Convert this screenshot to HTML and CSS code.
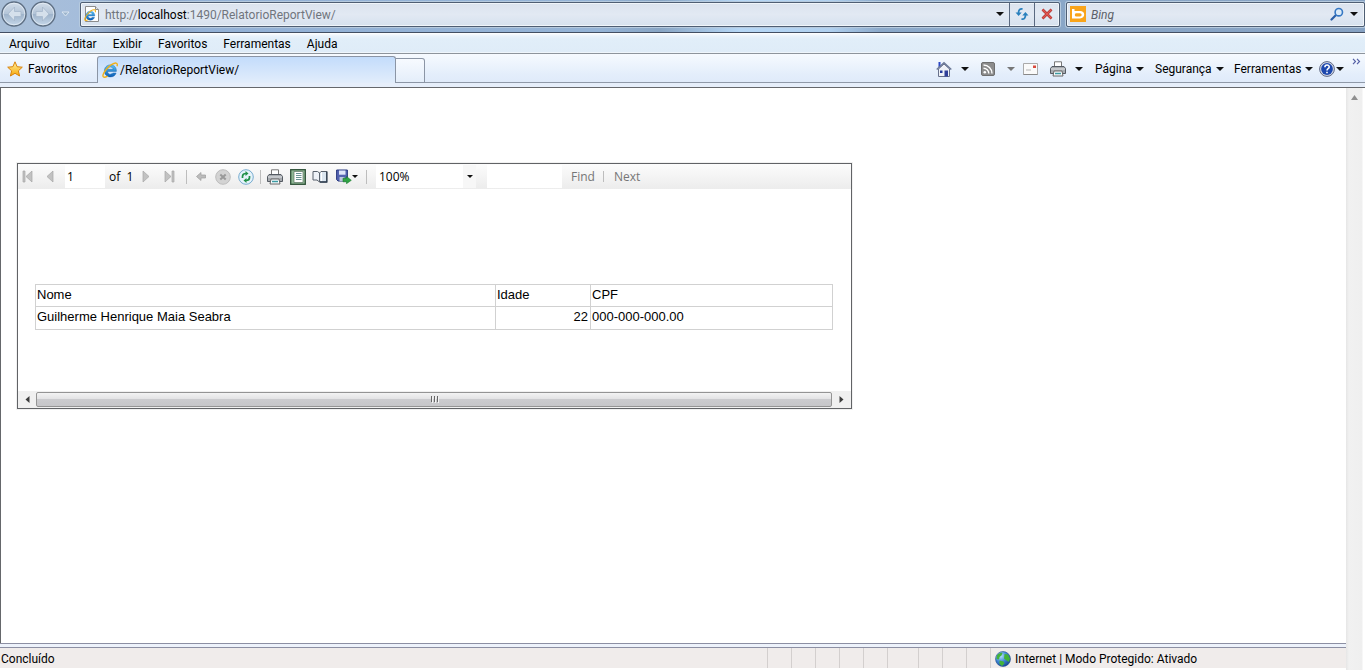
FILE: index.html
```html
<!DOCTYPE html>
<html lang="pt-BR">
<head>
<meta charset="utf-8">
<title>/RelatorioReportView/</title>
<link rel="stylesheet" href="styles.css">
</head>
<body>
<svg class="defs" aria-hidden="true">
  <defs>
    <linearGradient id="ieBlue" x1="0" y1="0" x2="0" y2="1"><stop offset="0" stop-color="#59c4f5"/><stop offset="1" stop-color="#0b5cb5"/></linearGradient>
    <linearGradient id="starGold" x1="0" y1="0" x2="0" y2="1"><stop offset="0" stop-color="#fff3a0"/><stop offset="1" stop-color="#f7a708"/></linearGradient>
    <linearGradient id="navGlass" x1="0" y1="0" x2="0" y2="1"><stop offset="0" stop-color="#d3deea"/><stop offset=".48" stop-color="#b4c5d8"/><stop offset=".52" stop-color="#9fb4cb"/><stop offset="1" stop-color="#c6d8ea"/></linearGradient>
    <radialGradient id="globe" cx=".35" cy=".3" r=".8"><stop offset="0" stop-color="#b7e2fb"/><stop offset=".5" stop-color="#3d86d2"/><stop offset="1" stop-color="#123c8c"/></radialGradient>
  </defs>
  <symbol id="ie" viewBox="0 0 16 16">
    <path d="M14.4 9.4H5.6c.2 1.9 1.3 2.8 2.9 2.8 1.1 0 1.9-.4 2.3-1.2h3.3c-.8 2.5-2.8 3.9-5.6 3.9-3.7 0-6.1-2.4-6.1-6 0-3.5 2.4-6 6-6 4 0 6.2 2.6 6 6.500zM5.600 7.300h5.500c-.2-1.500-1.200-2.300-2.700-2.300-1.500 0-2.500.8-2.800 2.300z" fill="url(#ieBlue)" stroke="#0a58a8" stroke-width=".4"/>
    <path d="M15 4.300c.6-1.800.3-3-.9-3.200C12 .8 7.300 3.500 4 7.700 1.300 11.200.200 14 1.500 15c.8.600 2.300.2 4-.8" fill="none" stroke="#f0b018" stroke-width="1.400"/>
  </symbol>
  <symbol id="printer" viewBox="0 0 16 16">
    <path d="M4.500 6V.8h7V6" fill="#fff" stroke="#777"/>
    <path d="M2 5.500h12l1.500 2v5H.5v-5z" fill="#a7abb0" stroke="#555b63"/>
    <path d="M1 8h14" stroke="#e4e6e9"/>
    <path d="M4 10h8l1 5H3z" fill="#f8fbfd" stroke="#666"/>
    <path d="M5 12.500h6" stroke="#3d9ba3" stroke-width="1.500"/>
  </symbol>
</svg>

<div class="browser">
  <header class="address-row">
    <div class="nav-buttons">
      <button class="icon-btn" aria-label="Voltar"><svg width="26" height="26" viewBox="0 0 26 26"><circle cx="13" cy="13" r="12" fill="url(#navGlass)" stroke="#5e6f83" stroke-width="1.400"/><circle cx="13" cy="13" r="10.800" fill="none" stroke="#e9f1f8" stroke-opacity=".7"/><path d="M13.500 6 7 13l6.500 7v-4.500H20v-5h-6.500z" fill="#d5e0eb" stroke="#a6b8cb" stroke-width=".8"/></svg></button>
      <button class="icon-btn" aria-label="Avançar"><svg width="26" height="26" viewBox="0 0 26 26"><circle cx="13" cy="13" r="12" fill="url(#navGlass)" stroke="#5e6f83" stroke-width="1.400"/><circle cx="13" cy="13" r="10.800" fill="none" stroke="#e9f1f8" stroke-opacity=".7"/><path d="M12.500 6 19 13l-6.500 7v-4.500H6v-5h6.500z" fill="#d5e0eb" stroke="#a6b8cb" stroke-width=".8"/></svg></button>
      <button class="icon-btn history" aria-label="Páginas recentes"><svg width="9" height="6" viewBox="0 0 9 6"><path d="M1 1h7L4.500 5z" fill="#9cb4cc" stroke="#dfe9f3" stroke-width=".9"/></svg></button>
    </div>
    <div class="address">
      <svg width="16" height="16" viewBox="0 0 16 16"><path d="M1.500.5h10l3 3v12h-13z" fill="#fff" stroke="#8c8c8c"/><path d="M11.500.5v3h3" fill="#e4e4e4" stroke="#8c8c8c"/><use href="#ie" x="0" y="3" width="12" height="12"/></svg>
      <div class="url" role="textbox" aria-label="Endereço">http://<b>localhost</b>:1490/RelatorioReportView/</div>
      <button class="icon-btn addr-drop" aria-label="Mostrar endereços"><i class="caret"></i></button>
      <button class="icon-btn addr-action" aria-label="Atualizar"><svg width="14" height="14" viewBox="0 0 14 14"><path d="M7.500 2C5 1.500 3.500 3 3.500 6M6.500 12c2.500.5 4-1 4-4" fill="none" stroke="#2a80bd" stroke-width="1.800"/><path d="M.5 5.500h6.200L3.600 9zM13.500 8.500H7.300L10.400 5z" fill="#2a80bd"/></svg></button>
      <button class="icon-btn addr-action" aria-label="Parar"><svg width="12" height="12" viewBox="0 0 12 12"><path d="m1.500 1.500 9 9m0-9-9 9" stroke="#a9302c" stroke-width="2.600"/><path d="m1.500 1.500 9 9m0-9-9 9" stroke="#e25650" stroke-width="1.400"/></svg></button>
    </div>
    <div class="search">
      <svg width="16" height="16" viewBox="0 0 16 16"><path d="M0 0h16v16H0z" fill="#f9a41a"/><path d="M2 3h2.500v2H10c2.600 0 4.200 1.400 4.200 3.600S12.600 12.500 10 12.500H2zM6 7.200c-1.500 0-1.500 3.200 0 3.200h4c2.200 0 2.200-3.200 0-3.200z" fill="#fff" fill-rule="evenodd"/></svg>
      <input class="search-input" type="text" placeholder="Bing" aria-label="Pesquisar">
      <button class="icon-btn" aria-label="Procurar"><svg width="14" height="14" viewBox="0 0 14 14"><path d="M6.500 7.500 1.500 12.500" stroke="#2a5fa8" stroke-width="2.200" stroke-linecap="round"/><circle cx="8.800" cy="5.200" r="3.700" fill="#dcebf8" stroke="#3678c4" stroke-width="1.600"/></svg></button>
      <button class="icon-btn search-drop" aria-label="Opções de pesquisa"><i class="caret"></i></button>
    </div>
  </header>

  <nav class="menu">
    <button>Arquivo</button><button>Editar</button><button>Exibir</button><button>Favoritos</button><button>Ferramentas</button><button>Ajuda</button>
  </nav>

  <div class="command-row">
    <button class="favorites"><svg width="16" height="16" viewBox="0 0 16 16"><path d="m8 .8 2.100 4.900 5.200.5-3.900 3.600 1.200 5.200L8 12.300 3.400 15l1.200-5.200L.7 6.200l5.200-.5z" fill="url(#starGold)" stroke="#d9820b" stroke-linejoin="round"/></svg>Favoritos</button>
    <button class="tab"><svg width="16" height="16"><use href="#ie"/></svg>/RelatorioReportView/</button>
    <button class="new-tab" aria-label="Nova guia"></button>
    <div class="commands">
      <button class="cmd cmd-home" aria-label="Página inicial"><svg width="16" height="16" viewBox="0 0 16 16"><path d="M2.500 1h2v5h-2z" fill="#2b46c5"/><path d="M2.500 8v7.500h11V8L8 3z" fill="#eef1f7" stroke="#68718c"/><path d="M.7 8.500 8 1.800l7.300 6.700" fill="none" stroke="#6b7896" stroke-width="1.500"/><path d="M8.500 9.500H12v6H8.500z" fill="#2f3f99"/><path d="M4 9.500h2.500V12H4z" fill="#253a9b"/></svg><i class="caret"></i></button>
      <button class="cmd cmd-feed" aria-label="Feeds"><svg width="14" height="14" viewBox="0 0 14 14"><rect x=".5" y=".5" width="13" height="13" rx="1.500" fill="#8c8c8c" stroke="#6f6f6f"/><circle cx="3.800" cy="10.300" r="1.300" fill="#fff"/><path d="M2.500 6.200a5.300 5.300 0 0 1 5.300 5.300M2.500 3a8.500 8.500 0 0 1 8.500 8.500" fill="none" stroke="#fff" stroke-width="1.400"/></svg><i class="caret dim"></i></button>
      <button class="cmd cmd-mail" aria-label="Email"><svg width="15" height="12" viewBox="0 0 15 12"><path d="M.5.5h14v11H.5z" fill="#fafafa" stroke="#aaa"/><path d="M.5 11.500h14" stroke="#888"/><path d="M10 2.500h3v2.500h-3z" fill="#d94a3f"/><path d="M3 7h5" stroke="#b5b5b5"/></svg></button>
      <button class="cmd cmd-print" aria-label="Imprimir"><svg width="16" height="16"><use href="#printer"/></svg><i class="caret"></i></button>
      <button class="cmd cmd-page">Página<i class="caret"></i></button>
      <button class="cmd cmd-safety">Segurança<i class="caret"></i></button>
      <button class="cmd cmd-tools">Ferramentas<i class="caret"></i></button>
      <button class="cmd cmd-help" aria-label="Ajuda"><svg width="16" height="16" viewBox="0 0 16 16"><circle cx="8" cy="8" r="7.400" fill="#d7dce8" stroke="#5d6785"/><circle cx="8" cy="8" r="5.900" fill="#1d48ae"/><path d="M5.900 6.200c0-3 4.400-2.800 4.300-.2C10.200 7.600 8 7.600 8 9.400M8 10.700v1.600" fill="none" stroke="#fff" stroke-width="1.600"/></svg><i class="caret"></i></button>
      <button class="cmd more" aria-label="Mais"><svg width="9" height="7" viewBox="0 0 9 7"><path d="m1 .8 2.500 2.700L1 6.200M5 .8l2.500 2.700L5 6.200" fill="none" stroke="#5661a6" stroke-width="1.200"/></svg></button>
    </div>
  </div>

  <div class="body-row">
    <div class="page-column">
      <main class="page">
        <section class="report">
          <div class="report-bar">
            <button class="icon-btn first" aria-label="Primeira página"><svg width="11" height="13" viewBox="0 0 11 13"><path d="M1 1h2v11H1zM10 1v11L4 6.500z" fill="#c2c2c2" stroke="#a6a6a6" stroke-width=".7"/></svg></button>
            <button class="icon-btn prev" aria-label="Página anterior"><svg width="8" height="13" viewBox="0 0 8 13"><path d="M7 1v11L1 6.500z" fill="#c2c2c2" stroke="#a6a6a6" stroke-width=".7"/></svg></button>
            <input class="page-input" type="text" value="1" aria-label="Página atual">
            <span class="total">of&nbsp; 1</span>
            <button class="icon-btn next" aria-label="Próxima página"><svg width="8" height="13" viewBox="0 0 8 13"><path d="M1 1v11l6-5.500z" fill="#c2c2c2" stroke="#a6a6a6" stroke-width=".7"/></svg></button>
            <button class="icon-btn last" aria-label="Última página"><svg width="11" height="13" viewBox="0 0 11 13"><path d="M8 1h2v11H8zM1 1v11l6-5.500z" fill="#c2c2c2" stroke="#a6a6a6" stroke-width=".7"/></svg></button>
            <i class="divider"></i>
            <button class="icon-btn back" aria-label="Voltar ao relatório pai"><svg width="10" height="9" viewBox="0 0 10 9"><path d="M5 .5.500 4.500l4.500 4V6h4.500V3H5z" fill="#bcbcbc" stroke="#9d9d9d" stroke-width=".7"/></svg></button>
            <button class="icon-btn stop" aria-label="Parar"><svg width="16" height="16" viewBox="0 0 16 16"><circle cx="8" cy="8" r="7.300" fill="#d3d3d3" stroke="#bdbdbd"/><path d="m5.300 5.500 5.400 5m0-5-5.400 5" stroke="#999" stroke-width="2"/></svg></button>
            <button class="icon-btn refresh" aria-label="Atualizar"><svg width="16" height="16" viewBox="0 0 16 16"><circle cx="8" cy="8" r="7.300" fill="#e6f3fb" stroke="#77acd0"/><path d="M4.500 9V7.500C4.500 5.500 6 4.500 8 4.500" fill="none" stroke="#219149" stroke-width="1.700"/><path d="M7.500 2v5L10.500 4.500z" fill="#219149"/><path d="M11.500 7v1.500c0 2-1.500 3-3.500 3" fill="none" stroke="#219149" stroke-width="1.700"/><path d="M8.500 9v5L5.500 11.500z" fill="#219149"/></svg></button>
            <i class="divider"></i>
            <button class="icon-btn print" aria-label="Imprimir"><svg width="16" height="16"><use href="#printer"/></svg></button>
            <button class="icon-btn layout" aria-label="Layout de impressão"><svg width="16" height="16" viewBox="0 0 16 16"><rect x=".7" y=".7" width="14.600" height="14.600" fill="#8fb795" stroke="#2f5138" stroke-width="1.300"/><path d="M4 2.500h9v11H4z" fill="#fff" stroke="#5d7563" stroke-width=".7"/><path d="M6 4.500h5.500M6 6.500h5.500M6 8.500h5.500M6 10.500h5.500" stroke="#477" stroke-width=".8"/></svg></button>
            <button class="icon-btn setup" aria-label="Configurar página"><svg width="16" height="14" viewBox="0 0 16 14"><path d="M1 1.500h4.500L7.500 3v9L5 10H1z" fill="#eef2f7" stroke="#59616c"/><path d="M7.500 3 9 1.500h5.800v10.500H7.500z" fill="#dbe6f0" stroke="#59616c"/><path d="M9.500 2.200v9" stroke="#fff"/><path d="M14.800 1.500V12H8" fill="none" stroke="#2e3d4f" stroke-width="1.300"/></svg></button>
            <button class="icon-btn save" aria-label="Exportar"><svg width="16" height="15" viewBox="0 0 16 15"><path d="M.6 1h10.800v11H2L.6 10.600z" fill="#5363b1" stroke="#29387f"/><path d="M3 1.500h6.500v4.200H3z" fill="#dfe5fa"/><path d="M3.500 8h5v4h-5z" fill="#bcc5dd"/><path d="M7 9.200h3.500V7.500l4.800 3.800-4.800 3.400v-1.900H7z" fill="#2fa344" stroke="#187a2d" stroke-width=".6"/></svg><i class="caret"></i></button>
            <i class="divider"></i>
            <div class="zoom">
              <select class="zoom-select" aria-label="Zoom"><option>100%</option></select>
              <i class="zoom-caret"><i class="caret"></i></i>
            </div>
            <input class="find-input" type="text" aria-label="Localizar texto">
            <button class="find">Find</button>
            <i class="divider small"></i>
            <button class="find">Next</button>
          </div>
          <div class="report-view">
            <table class="data">
              <colgroup><col class="c-name"><col class="c-age"><col class="c-cpf"></colgroup>
              <tr class="head"><td>Nome</td><td>Idade</td><td>CPF</td></tr>
              <tr><td>Guilherme Henrique Maia Seabra</td><td class="num">22</td><td>000-000-000.00</td></tr>
            </table>
          </div>
          <div class="hscroll">
            <button class="icon-btn arrow" aria-label="Rolar para a esquerda"><svg width="5" height="7" viewBox="0 0 5 7"><path d="M4.500 0v7L.5 3.500z" fill="#3c3c3c"/></svg></button>
            <div class="thumb"><svg width="9" height="7" viewBox="0 0 9 7"><path d="M1.500 0v6M4.500 0v6M7.500 0v6" stroke="#666"/><path d="M2.500 1v6M5.500 1v6M8.500 1v6" stroke="#f4f4f4"/></svg></div>
            <button class="icon-btn arrow" aria-label="Rolar para a direita"><svg width="5" height="7" viewBox="0 0 5 7"><path d="M.5 0v7l4-3.500z" fill="#3c3c3c"/></svg></button>
          </div>
        </section>
      </main>
      <div class="splitter"></div>
      <footer class="status">
        <span class="status-text">Concluído</span>
        <div class="panes"><i class="pane"></i><i class="pane"></i><i class="pane"></i><i class="pane"></i><i class="pane"></i><i class="pane wide"></i><i class="pane"></i><i class="pane"></i><i class="pane"></i></div>
        <div class="zone"><svg width="16" height="16" viewBox="0 0 16 16"><circle cx="8" cy="8" r="7.500" fill="url(#globe)" stroke="#25508f" stroke-width=".6"/><path d="M2 4.500C4 1.500 6.500 1.300 7.500 2L6.500 4.500 4.500 6l-.5 2.500L1.500 8zM9.500 3l3.500.5 2 4-1 3.500-2.500-1.500L9 7.500zM4.500 9.500l4 1 1 2-2.500 2.500-2.500-2z" fill="#43b338"/></svg>Internet | Modo Protegido: Ativado</div>
      </footer>
    </div>
    <div class="vscroll"><svg width="7" height="5" viewBox="0 0 7 5"><path d="M3.500 0 7 5H0z" fill="#8f8f8f"/></svg></div>
  </div>
</div>
</body>
</html>
```
FILE: styles.css
```css
* { box-sizing: border-box; }

body {
  margin: 0;
  background: #fff;
  color: #000;
  font-family: Roboto, "Noto Sans", sans-serif;
  font-size: 12px;
  line-height: 16px;
}

button, input, select {
  margin: 0;
  padding: 0;
  border: 0;
  background: none;
  color: inherit;
  font: inherit;
}

svg { display: block; flex: none; }
.defs { position: absolute; width: 0; height: 0; }

.icon-btn { display: flex; align-items: center; justify-content: center; }

.caret {
  flex: none;
  border: 4px solid transparent;
  border-top-color: #111;
  border-bottom: 0;
}
.caret.dim { border-top-color: #777; }

.browser { display: flex; flex-direction: column; min-height: 100vh; }

/* Address row */
.address-row {
  display: flex;
  align-items: center;
  gap: 6px;
  height: 33px;
  padding: 0 0 4px;
  border-bottom: 1px solid #434f63;
  background: linear-gradient(90deg, #a9bfd8 0, #a5bddb 80px, #8099bd 130px, #93b1d6 200px, #94b3d6 600px, #88a5c4 660px, #b6d7f6 740px, #b0d0ef 830px, #8ba9ca 880px, #86a2c3 100%);
}
.nav-buttons { display: flex; align-items: center; gap: 3px; width: 74px; padding-left: 1px; }
.history { width: 12px; }
.address, .search {
  display: flex;
  align-items: center;
  height: 25px;
  border: 1px solid #4f5e73;
  border-radius: 2px;
  background: linear-gradient(#dbe3ee, #e2e9f3 50%, #d6e1ee);
  box-shadow: inset 0 0 0 1px #f0f5fa, 0 0 0 1px #b6cade;
}
.address { flex: 1; padding-left: 3px; }
.url { flex: 1; padding: 1px 0 0 5px; color: #70757d; white-space: nowrap; }
.url b { font-weight: 400; color: #000; }
.addr-drop { width: 18px; height: 23px; }
.addr-action { width: 25px; height: 23px; border-left: 1px solid #5a6980; }
.search { flex: 0 0 299px; padding-left: 3px; }
.search-input { flex: 1; min-width: 0; padding: 1px 0 0 5px; outline: 0; font-style: italic; }
.search-input::placeholder { color: #5c6068; opacity: 1; }
.search-drop { width: 20px; }

/* Menu */
.menu {
  display: flex;
  gap: 16px;
  height: 21px;
  padding: 2px 9px 0;
  border-bottom: 1px solid #8d949c;
  background: linear-gradient(#fff 0, #e9f2fb 3px, #e1eef9 6px, #dfecf8 19px, #fff 20px);
}

/* Favorites, tabs and commands */
.command-row {
  display: flex;
  height: 33px;
  padding-top: 2px;
  border-bottom: 4px solid #e6eefa;
  background: linear-gradient(#f6faff, #e4eefb 20px, #dfeafa);
  box-shadow: inset 0 -1px #8f99a8;
}
.favorites {
  display: flex;
  align-items: center;
  gap: 5px;
  width: 97px;
  height: 25px;
  padding-left: 7px;
}
.tab {
  display: flex;
  align-items: center;
  gap: 2px;
  width: 299px;
  padding: 0 4px;
  border: 1px solid #8b95a5;
  border-bottom: 0;
  border-radius: 3px 3px 0 0;
  background: linear-gradient(#c3dcfb, #e2edfb);
}
.new-tab {
  width: 29px;
  margin-top: 2px;
  border: 1px solid #8b95a5;
  border-left: 0;
  border-radius: 0 3px 0 0;
  background: linear-gradient(#f7faff, #e4eefa);
}
.commands { display: flex; align-items: center; height: 25px; margin-left: auto; }
.cmd { display: flex; align-items: center; gap: 4px; white-space: nowrap; }
.cmd-home, .cmd-feed, .cmd-print { gap: 9px; }
.cmd-home { width: 45px; }
.cmd-feed { width: 42px; }
.cmd-feed .caret { margin-left: 3px; }
.cmd-mail { width: 27px; }
.cmd-print { width: 45px; }
.cmd-page { width: 60px; }
.cmd-safety { width: 79px; }
.cmd-tools { width: 85px; }
.cmd-help { width: 33px; gap: 1px; }
.more { width: 13px; height: 25px; align-items: flex-start; padding-top: 2px; }

/* Page */
.body-row { display: flex; flex: 1; }
.page-column { display: flex; flex: 1; flex-direction: column; min-width: 0; }
.page {
  flex: 1;
  padding: 75px 16px 0;
  border: solid #65676b;
  border-width: 1px 0 0 1px;
}
.vscroll {
  display: flex;
  justify-content: center;
  width: 19px;
  padding: 7px 3px 0 0;
  border-top: 1px solid #65676b;
  background: linear-gradient(90deg, #e6e6e6 0, #f1f1f1 3px, #efefef 16px, #fff 17px);
}
.splitter { height: 5px; border: solid #8c8fa3; border-width: 1px 0; background: #edf2fb; }
.status { display: flex; align-items: center; height: 22px; padding-left: 1px; border-bottom: 2px solid #fff; background: #f0eceb; }
.status-text { flex: 1; padding-top: 2px; }
.panes { display: flex; align-self: stretch; }
.pane { width: 24px; border-left: 1px solid #d3cfce; }
.pane.wide { width: 31px; }
.zone {
  display: flex;
  align-items: center;
  align-self: stretch;
  gap: 4px;
  width: 356px;
  padding: 2px 0 0 4px;
  border-left: 1px solid #d3cfce;
}

/* Report viewer */
.report {
  width: 835px;
  max-width: 100%;
  border: 1px solid #616366;
  box-shadow: 0 0 0 1px #f1f1f1;
}
.report-bar {
  display: flex;
  align-items: center;
  height: 25px;
  padding-left: 4px;
  background: linear-gradient(#fcfcfc, #ececec);
  font-family: "Open Sans", "Noto Sans", sans-serif;
}
.first { width: 20px; justify-content: flex-start; }
.prev { width: 15px; }
.page-input { width: 40px; height: 23px; margin-left: 8px; padding-left: 2px; background: #fff; }
.total { width: 32px; padding-left: 4px; white-space: nowrap; }
.next { width: 18px; }
.last { width: 28px; }
.divider { width: 1px; height: 14px; margin: 0 3px; background: #bdbdbd; }
.back { width: 21px; }
.stop { width: 23px; }
.refresh { width: 23px; }
.print { width: 22px; }
.layout { width: 23px; }
.setup { width: 22px; }
.save { width: 32px; gap: 0; }
.save .caret { border-width: 3px 3px 0; }
.zoom { display: flex; width: 100px; height: 23px; margin-left: 6px; background: #fff; }
.zoom-select { flex: 1; padding-left: 3px; appearance: none; }
.zoom-caret { display: flex; align-items: center; justify-content: center; width: 13px; background: #f7f7f7; }
.zoom-caret .caret { border-width: 3px 3px 0; }
.find-input { width: 75px; height: 23px; margin-left: 11px; background: #fff; }
.find { margin: 0 6px 0 9px; color: #767676; }
.divider.small { height: 11px; margin: 0 1px 0 2px; }

.report-view { padding: 95px 18px 61px 17px; }
.data {
  width: 100%;
  table-layout: fixed;
  border-collapse: collapse;
  font-family: "Liberation Sans", Arial, sans-serif;
  font-size: 13px;
}
.c-name { width: 460px; }
.c-age { width: 95px; }
.data td { height: 23px; padding: 2px 2px 4px 1px; border: 1px solid #d1d1d1; }
.data .head td { height: 22px; padding-bottom: 3px; }
.data .num { text-align: right; }

.hscroll { display: flex; height: 17px; padding-right: 1px; background: #f0f0f0; }
.arrow { width: 18px; }
.thumb {
  display: flex;
  flex: 1;
  align-items: center;
  justify-content: center;
  margin: 1px 0;
  border: 1px solid #949494;
  border-radius: 2px;
  background: linear-gradient(#f3f3f3, #e3e3e5 45%, #cbcbce 50%, #c6c6c9);
}
```
